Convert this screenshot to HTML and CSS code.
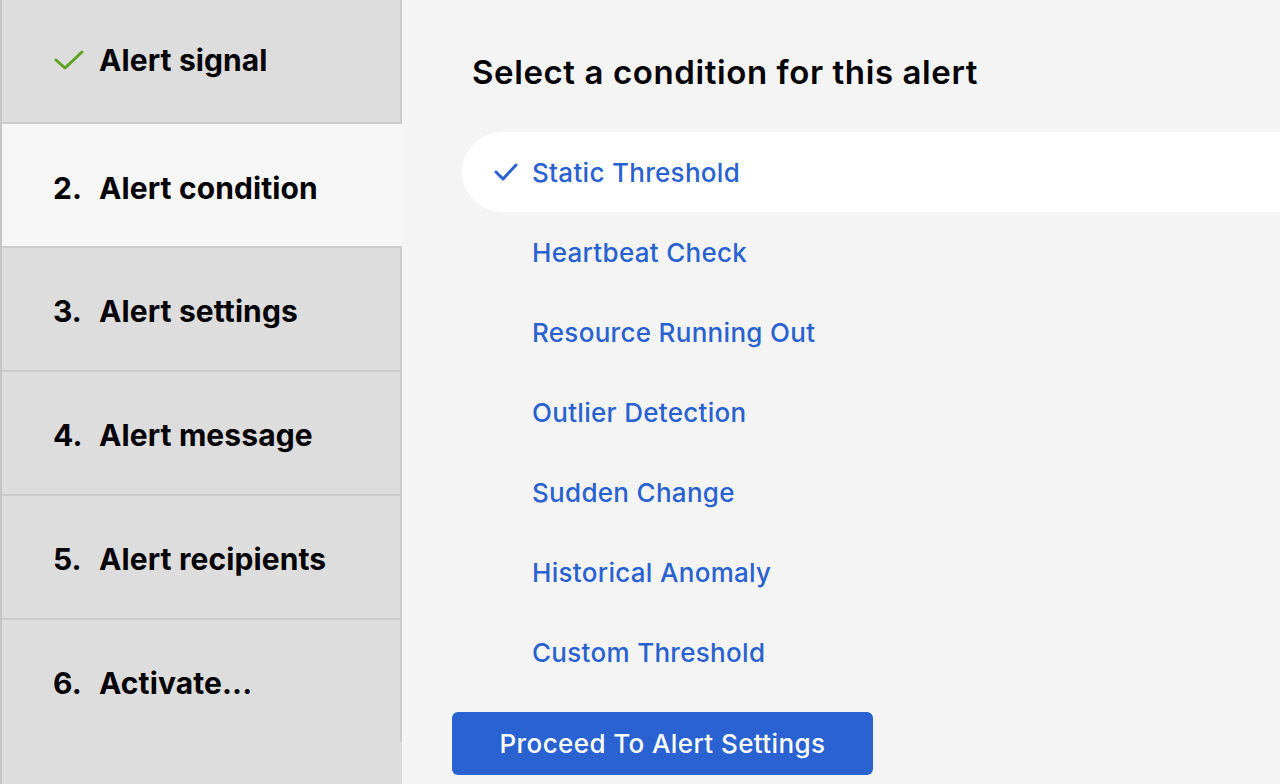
FILE: index.html
```html
<!DOCTYPE html>
<html lang="en">
<head>
<meta charset="utf-8">
<title>Alert condition</title>
<link rel="stylesheet" href="styles.css">
</head>
<body>
<div class="app">
  <aside class="steps">
    <div class="step done">
      <span class="num"><svg class="ok" viewBox="0 0 30 22" width="30" height="22"><path d="M2 11 L11 19 L28 3" fill="none" stroke="#5aa31f" stroke-width="3" stroke-linecap="round" stroke-linejoin="round"/></svg></span>
      <span class="label">Alert signal</span>
    </div>
    <div class="step active">
      <span class="num">2.</span><span class="label">Alert condition</span>
    </div>
    <div class="step">
      <span class="num">3.</span><span class="label">Alert settings</span>
    </div>
    <div class="step">
      <span class="num">4.</span><span class="label">Alert message</span>
    </div>
    <div class="step">
      <span class="num">5.</span><span class="label">Alert recipients</span>
    </div>
    <div class="step last">
      <span class="num">6.</span><span class="label">Activate...</span>
    </div>
  </aside>
  <main class="content">
    <h1 class="title">Select a condition for this alert</h1>
    <ul class="conditions">
      <li class="cond selected"><svg class="tick" viewBox="0 0 24 20" width="24" height="20"><path d="M2 10 L9 17 L22 3" fill="none" stroke="#2962d0" stroke-width="3" stroke-linecap="round" stroke-linejoin="round"/></svg><span>Static Threshold</span></li>
      <li class="cond"><span>Heartbeat Check</span></li>
      <li class="cond"><span>Resource Running Out</span></li>
      <li class="cond"><span>Outlier Detection</span></li>
      <li class="cond"><span>Sudden Change</span></li>
      <li class="cond"><span>Historical Anomaly</span></li>
      <li class="cond"><span>Custom Threshold</span></li>
    </ul>
    <button class="proceed">Proceed To Alert Settings</button>
  </main>
</div>
</body>
</html>
```

FILE: styles.css
```css
* { box-sizing: border-box; }
html, body { margin: 0; padding: 0; }
body {
  font-family: Inter, "Noto Sans", "Liberation Sans", sans-serif;
  background: #f4f4f4;
  color: #000;
  overflow: hidden;
}
.app {
  display: flex;
  height: 784px;
}
.steps {
  width: 402px;
  flex: none;
  background: #dddddd;
  border-left: 2px solid #c6c6c6;
  display: flex;
  flex-direction: column;
}
.step {
  height: 124px;
  border-bottom: 2px solid #cccccc;
  border-right: 2px solid #cccccc;
  display: flex;
  align-items: center;
  padding-left: 51px;
  padding-top: 4px;
  font-weight: 700;
  font-size: 30px;
  letter-spacing: 0.1px;
}
.step.active {
  background: #f6f6f6;
  border-right: none;
  padding-top: 6px;
}
.step.last {
  height: 122px;
  border-bottom: none;
}
.step.done { padding-top: 0; padding-bottom: 2px; }
.num {
  width: 46px;
  flex: none;
  display: flex;
  align-items: center;
}
.ok { margin-left: 1px; }
.content {
  flex: 1;
  padding-left: 60px;
  min-width: 0;
}
.title {
  margin: 52px 0 0 10px;
  font-size: 33px;
  font-weight: 600;
  line-height: 40px;
  letter-spacing: 0.6px;
}
.conditions {
  list-style: none;
  margin: 40px 0 0 0;
  padding: 0;
}
.cond {
  height: 80px;
  display: flex;
  align-items: center;
  padding-left: 70px;
  color: #2962d0;
  font-size: 26px;
  font-weight: 500;
  letter-spacing: 0.3px;
  border-radius: 40px 0 0 40px;
}
.cond.selected {
  background: #ffffff;
  padding-left: 32px;
}
.tick { margin-right: 14px; flex: none; }
.proceed {
  margin: 20px 0 0 -10px;
  width: 421px;
  height: 63px;
  border: none;
  border-radius: 6px;
  background: #2a63d1;
  color: #fff;
  font-family: inherit;
  font-size: 26px;
  font-weight: 500;
  letter-spacing: 0.4px;
  padding: 0;
}
```
